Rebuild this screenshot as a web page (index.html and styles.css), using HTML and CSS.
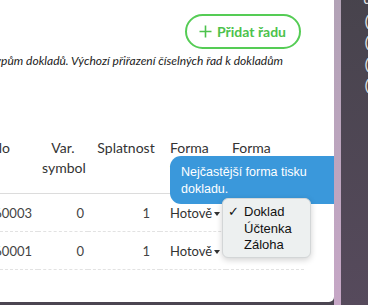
FILE: index.html
```html
<!DOCTYPE html>
<html lang="cs">
<head>
    <meta charset="UTF-8">
    <meta name="viewport" content="width=device-width, initial-scale=1.0">
    <title>Číselné řady</title>
    <link rel="stylesheet" href="styles.css">
</head>
<body>
    <div class="panel">
        <div class="toolbar">
            <button class="btn-add">
                <svg width="13" height="13" viewBox="0 0 13 13"><path d="M6.5 0.5v12M0.5 6.5h12" stroke="#4cc24c" stroke-width="1.6" fill="none"/></svg>
                Přidat řadu
            </button>
        </div>
        <div class="subtitle">
            <span>Zde můžete přiřadit číselné řady jednotlivým typům dokladů. Výchozí přiřazení číselných řad k dokladům</span>
        </div>

        <table class="rady">
            <thead>
                <tr>
                    <th class="col-cislo"><div class="clip"><span>Poslední číslo</span></div></th>
                    <th class="col-var">Var. symbol</th>
                    <th class="col-spl">Splatnost</th>
                    <th class="col-forma">Forma tisku</th>
                    <th class="col-forma2">Forma úhrady</th>
                </tr>
            </thead>
            <tbody>
                <tr>
                    <td class="col-cislo"><div class="clip"><span>FV2024060003</span></div></td>
                    <td class="col-var">0</td>
                    <td class="col-spl">1</td>
                    <td class="col-forma">Hotově<span class="caret"></span></td>
                    <td class="col-forma2"></td>
                </tr>
                <tr>
                    <td class="col-cislo"><div class="clip"><span>PD2024060001</span></div></td>
                    <td class="col-var">0</td>
                    <td class="col-spl">1</td>
                    <td class="col-forma">Hotově<span class="caret"></span></td>
                    <td class="col-forma2"></td>
                </tr>
            </tbody>
        </table>

        <div class="tooltip">Nejčastější forma tisku dokladu.</div>

        <ul class="menu">
            <li class="checked"><span class="check">✓</span>Doklad</li>
            <li>Účtenka</li>
            <li>Záloha</li>
        </ul>
    </div>
    <div class="strip"></div>
    <div class="code">
        <div>d</div>
        <div>(</div>
        <div>(</div>
        <div>(</div>
        <div>(</div>
    </div>
</body>
</html>
```

FILE: styles.css
```css
body {
    font-family: Lato, "Open Sans", sans-serif;
    background-color: #4b4551;
    margin: 0;
    padding: 0;
    display: flex;
    height: 305px;
    overflow: hidden;
}

.panel {
    position: relative;
    width: 334px;
    height: 302px;
    background-color: #fff;
    border-bottom-right-radius: 5px;
    overflow: hidden;
    flex-shrink: 0;
}

.toolbar {
    display: flex;
    justify-content: flex-end;
    padding: 14px 33px 0 0;
}

.btn-add {
    display: flex;
    align-items: center;
    gap: 5px;
    height: 35px;
    width: 116px;
    padding: 0 0 0 12px;
    border: 2px solid #55cc55;
    border-radius: 18px;
    background-color: #fff;
    color: #4cc24c;
    font-family: Lato, sans-serif;
    font-size: 14px;
    font-weight: bold;
}

.subtitle {
    display: flex;
    justify-content: flex-end;
    overflow: hidden;
    white-space: nowrap;
    padding-right: 51px;
    margin-top: 4px;
    font-size: 12px;
    font-style: italic;
    line-height: 16px;
    color: #222;
}

.rady {
    margin-top: 49px;
    border-collapse: collapse;
    table-layout: fixed;
    width: 300px;
    color: #333;
    font-size: 14px;
}

.rady th {
    font-weight: normal;
    line-height: 20px;
    padding: 20px 4px 15px;
    border-bottom: 1px solid #dcdcdc;
    vertical-align: top;
    text-align: center;
}

.rady td {
    height: 37px;
    padding: 0 4px;
    border-bottom: 1px dashed #e2e2e2;
    text-align: right;
    font-size: 13px;
    color: #444;
}

.clip {
    display: flex;
    justify-content: flex-end;
    overflow: hidden;
    white-space: nowrap;
}

.rady .col-cislo {
    width: 32px;
    padding: 0 6px 0 0;
}

.rady th.col-cislo {
    padding: 20px 28px 15px 0;
    width: 10px;
}

.col-var {
    width: 42px;
}

.rady .col-spl {
    width: 58px;
    padding-right: 10px;
}

.rady th.col-spl {
    padding-left: 8px;
    padding-right: 4px;
    width: 60px;
}

.rady .col-forma {
    width: 56px;
    padding-left: 10px;
    padding-right: 0;
    text-align: left;
}

.rady .col-forma2 {
    width: 68px;
    padding-left: 6px;
    text-align: left;
}

.rady td.col-forma {
    color: #333;
    white-space: nowrap;
}

.caret {
    display: inline-block;
    margin-left: 2px;
    border-left: 3px solid transparent;
    border-right: 3px solid transparent;
    border-top: 4px solid #333;
    vertical-align: middle;
}

.tooltip {
    position: absolute;
    left: 170px;
    top: 156px;
    width: 189px;
    height: 48px;
    box-sizing: border-box;
    padding: 8px 8px 0 11px;
    background-color: #3a98db;
    border-radius: 11px;
    color: #fff;
    font-family: "Liberation Sans", sans-serif;
    font-size: 12.5px;
    line-height: 17px;
}

.menu {
    position: absolute;
    left: 222px;
    top: 198px;
    width: 89px;
    height: 60px;
    box-sizing: border-box;
    margin: 0;
    padding: 5px 0 0 21px;
    list-style: none;
    background-color: #edf0f0;
    border: 1px solid #d3d6d7;
    border-radius: 6px;
    box-shadow: 0 2px 6px rgba(0, 0, 0, 0.18);
    font-family: "Liberation Sans", sans-serif;
    font-size: 13px;
    line-height: 16.5px;
    color: #111;
}

.menu li {
    position: relative;
}

.check {
    position: absolute;
    left: -16px;
}

.strip {
    width: 7px;
    flex-shrink: 0;
    background: linear-gradient(#b2a2b6, #c6a7c6);
}

.code {
    flex: 1;
    padding: 0 0 0 22px;
    background: linear-gradient(#47434c, #564a5c);
    color: #e6e6e6;
    font-family: "Liberation Mono", monospace;
    font-size: 14px;
    line-height: 21.5px;
    margin-top: -10px;
}
```
